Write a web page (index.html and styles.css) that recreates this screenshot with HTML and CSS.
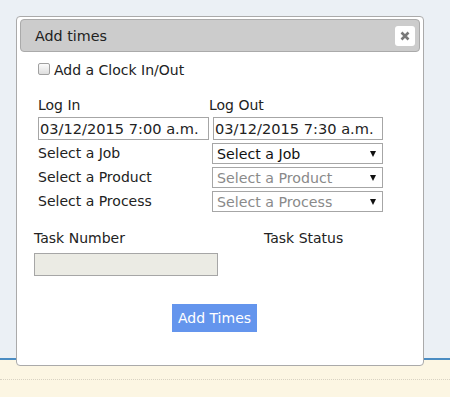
FILE: index.html
```html
<!DOCTYPE html>
<html lang="en">
<head>
  <meta charset="UTF-8" />
  <title>Add times</title>
  <meta name="viewport" content="width=device-width, initial-scale=1">
  <link rel="stylesheet" href="styles.css">
</head>
<body>
  <div class="screen">
    <div class="screen-top"></div>
    <div class="screen-bottom"><div class="screen-dots"></div></div>

    <div class="dialog">
      <div class="dialog-title">
        <span class="dialog-caption">Add times</span>
        <button class="dialog-close" title="Close">
          <svg width="10" height="10" viewBox="0 0 10 10">
            <path d="M1.5 1.5 L8.5 8.5 M8.5 1.5 L1.5 8.5" stroke="#7a7a7a" stroke-width="2.6" stroke-linecap="butt" fill="none"/>
          </svg>
        </button>
      </div>

      <div class="dialog-body">
        <label class="check-row"><input type="checkbox" class="check"> Add a Clock In/Out</label>

        <div class="time-labels">
          <span class="time-label">Log In</span>
          <span class="time-label">Log Out</span>
        </div>
        <div class="time-inputs">
          <input type="text" class="time-input" value="03/12/2015 7:00 a.m.">
          <input type="text" class="time-input time-input-out" value="03/12/2015 7:30 a.m.">
        </div>

        <div class="select-row">
          <span class="select-label">Select a Job</span>
          <span class="select-wrap">
            <select class="field-select"><option>Select a Job</option></select>
          </span>
        </div>
        <div class="select-row">
          <span class="select-label">Select a Product</span>
          <span class="select-wrap">
            <select class="field-select" disabled><option>Select a Product</option></select>
          </span>
        </div>
        <div class="select-row">
          <span class="select-label">Select a Process</span>
          <span class="select-wrap">
            <select class="field-select" disabled><option>Select a Process</option></select>
          </span>
        </div>

        <div class="task-grid">
          <span class="task-label">Task Number</span>
          <span class="task-label">Task Status</span>
          <input type="text" class="task-input" disabled>
        </div>

        <button class="add-btn">Add Times</button>
      </div>
    </div>
  </div>
</body>
</html>
```

FILE: styles.css
```css
:root {
  --page-bg: #ebf0f5;
  --page-cream: #fcf6e3;
  --page-rule: #4a8cc2;
  --border: #aaaaaa;
  --title-bg: #cccccc;
  --text: #222222;
  --muted: #8a8a8a;
  --btn: #6495ed;
}
* { box-sizing: border-box; margin: 0; padding: 0; }
body {
  font-family: 'DejaVu Sans', Verdana, sans-serif;
  font-size: 14px; color: var(--text);
  background: var(--page-cream);
}
.screen {
  position: relative; width: 450px; height: 397px; overflow: hidden;
}
.screen-top {
  height: 358px; background: var(--page-bg);
}
.screen-bottom {
  height: 39px; background: var(--page-cream);
  border-top: 2px solid var(--page-rule);
}
.screen-dots {
  height: 20px; border-bottom: 1px dotted #d8d2c2;
}

/* dialog sits over the page */
.dialog {
  position: absolute; left: 16px; top: 16px;
  width: 408px; height: 350px;
  background: #fff; border: 1px solid var(--border); border-radius: 4px;
  padding: 2px 3px;
}
.dialog-title {
  height: 33px; background: var(--title-bg);
  border: 1px solid var(--border); border-radius: 4px;
  display: flex; align-items: center; justify-content: space-between;
  padding: 0 4px 0 14px;
}
.dialog-caption {
  font-size: 14.3px; line-height: 17px; padding-top: 1px;
}
.dialog-close {
  width: 20px; height: 20px; border: none; border-radius: 3px;
  background: #fff; display: flex; align-items: center; justify-content: center;
  cursor: pointer; margin-top: 1px;
}
.dialog-body {
  padding: 0 0 0 14px;
}

.check-row {
  display: flex; align-items: flex-start; line-height: 17px;
  margin: 10px 0 0 4px;
}
.check {
  appearance: none; -webkit-appearance: none;
  width: 12px; height: 12px; margin: 1px 4px 0 0;
  border: 1px solid #a0a0a0; border-radius: 2px;
  background: linear-gradient(#fbfbfb, #dedede);
}

.time-labels {
  display: flex; line-height: 17px; margin: 18px 0 0 4px;
}
.time-label { width: 171px; }
.time-inputs {
  display: flex; gap: 4px; margin: 3px 0 0 4px;
}
.time-input {
  width: 171px; height: 23px;
  border: 1px solid #a6a6a6; padding: 0 1px;
  font-family: inherit; font-size: 14.6px; color: var(--text);
  background: #fff; outline: none;
}
.time-input-out { width: 170px; }

.select-row {
  display: flex; height: 21px; margin: 3px 0 0 4px;
  line-height: 21px;
}
.select-row + .select-row { margin-top: 3px; }
.select-label { width: 174px; }
.select-wrap { position: relative; width: 171px; }
.select-wrap::after {
  content: ''; position: absolute; right: 7px; top: 8px;
  border-left: 3px solid transparent; border-right: 3px solid transparent;
  border-top: 6px solid #111;
  pointer-events: none;
}
.field-select {
  appearance: none; -webkit-appearance: none;
  width: 171px; height: 21px; border: 1px solid #a6a6a6; border-radius: 0;
  background: #fff; padding: 0 0 0 4px;
  font-family: inherit; font-size: 14.2px; color: #111;
  opacity: 1;
}
.field-select:disabled { color: var(--muted); }

.task-grid {
  display: grid; grid-template-columns: 230px 1fr;
  row-gap: 6px; margin-top: 18px; line-height: 17px;
}
.task-input {
  width: 184px; height: 23px;
  border: 1px solid #a6a6a6; background: #ebebe4;
}

.add-btn {
  display: block; margin: 28px 0 0 138px;
  width: 85px; height: 28px; border: none;
  background: var(--btn); color: #fff;
  font-family: inherit; font-size: 14px;
  cursor: pointer;
}
```
